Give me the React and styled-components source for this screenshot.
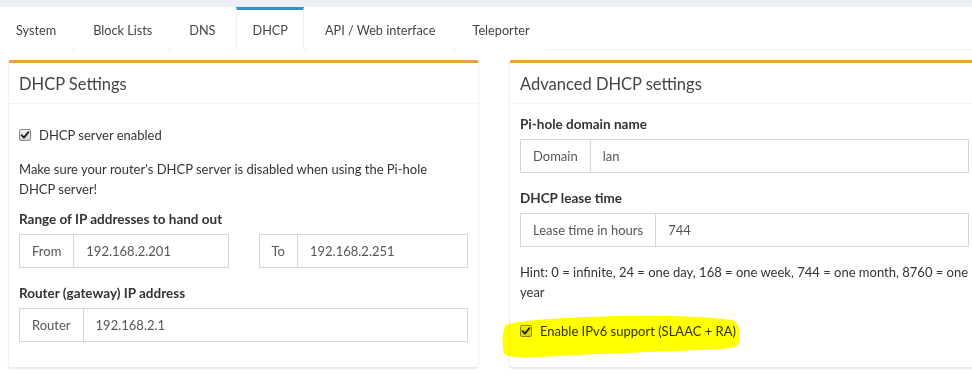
import React from "react";
import styled, { createGlobalStyle } from "styled-components";

const GlobalStyle = createGlobalStyle`
  html, body { margin: 0; padding: 0; background: #ffffff; }
  body {
    font-family: Lato, "Open Sans", Arial, sans-serif;
    font-size: 13px;
    color: #333;
    overflow: hidden;
  }
  * { box-sizing: border-box; }
`;

const Page = styled.div`
  position: relative;
  width: 972px;
  height: 375px;
  overflow: hidden;
  background: #fff;
`;

const TopStrip = styled.div`
  height: 7px;
  background: #ecf0f5;
`;

const TabBar = styled.ul`
  display: flex;
  margin: 0;
  padding: 0;
  list-style: none;
  background: #fff;
  border-bottom: 1px solid #f0f0f0;
`;

const Tab = styled.li`
  margin-right: 5px;
  padding: 10px 15px;
  line-height: 20px;
  font-size: 12.7px;
  color: #444;
  border-top: 3px solid ${(p) => (p.$active ? "#3c8dbc" : "transparent")};
  border-left: 1px solid ${(p) => (p.$active ? "#f0f0f0" : "transparent")};
  border-right: 1px solid ${(p) => (p.$active ? "#f0f0f0" : "transparent")};
  margin-bottom: -1px;
  background: #fff;
`;

const Content = styled.div`
  display: flex;
  align-items: stretch;
  gap: 30px;
  padding: 10px 0 0 8px;
`;

const Box = styled.section`
  flex: 0 0 471px;
  border-top: 3px solid #e9a13d;
  border-left: 1px solid #f1f1f1;
  border-right: 1px solid #f1f1f1;
  border-bottom: 1px solid #ececec;
  border-radius: 3px;
  box-shadow: 0 1px 1px rgba(0, 0, 0, 0.08);
  background: #fff;
`;

const BoxHeader = styled.div`
  padding: 11px 10px 9px;
  border-bottom: 1px solid #f2f2f2;
`;

const BoxTitle = styled.h3`
  margin: 0;
  font-size: 16.5px;
  font-weight: 400;
  line-height: 20px;
  color: #444;
`;

const BoxBody = styled.div`
  padding: 10px;
`;

const FormGroup = styled.div`
  margin-bottom: 15px;
`;

const Label = styled.label`
  display: block;
  margin-bottom: 5px;
  font-weight: 700;
  font-size: 13.5px;
  line-height: 20px;
  color: #333;
`;

const InputGroup = styled.div`
  display: flex;
  height: 34px;
  border: 1px solid #d2d6de;
  background: #fff;
`;

const Addon = styled.span`
  display: flex;
  align-items: center;
  padding: 0 12px;
  border-right: 1px solid #d2d6de;
  color: #555;
  white-space: nowrap;
`;

const Value = styled.span`
  display: flex;
  align-items: center;
  flex: 1;
  padding: 0 12px;
  color: #555;
`;

const TwoCols = styled.div`
  display: grid;
  grid-template-columns: 1fr 1fr;
  gap: 30px;
`;

const CheckRow = styled.div`
  display: flex;
  align-items: center;
  gap: 8px;
  height: 20px;
  margin-top: ${(p) => p.$mt || "10px"};
  margin-bottom: ${(p) => p.$mb || "10px"};
  line-height: 20px;
`;

const CheckBoxMark = styled.span`
  display: inline-flex;
  align-items: center;
  justify-content: center;
  width: 12px;
  height: 12px;
  border: 1px solid #8a8a8a;
  border-radius: 2px;
  background: linear-gradient(#eeeeee, #d6d6d6);
`;

const Paragraph = styled.p`
  margin: 0 0 10px;
  line-height: 20px;
`;

const Line = styled.span`
  display: block;
  white-space: nowrap;
`;

const Highlight = styled.svg`
  position: absolute;
  left: 500px;
  top: 312px;
  width: 242px;
  height: 50px;
  mix-blend-mode: multiply;
  pointer-events: none;
`;

function CheckBox() {
  return (
    <CheckBoxMark>
      <svg width="10" height="10" viewBox="0 0 10 10">
        <path d="M1.6 5.2 L3.9 7.6 L8.4 2.2" fill="none" stroke="#222" strokeWidth="1.9" strokeLinecap="round" strokeLinejoin="round" />
      </svg>
    </CheckBoxMark>
  );
}

function Field({ label, addon, value }) {
  return (
    <FormGroup>
      {label && <Label>{label}</Label>}
      <InputGroup>
        <Addon>{addon}</Addon>
        <Value>{value}</Value>
      </InputGroup>
    </FormGroup>
  );
}

const tabs = ["System", "Block Lists", "DNS", "DHCP", "API / Web interface", "Teleporter"];

export default function App() {
  return (
    <Page>
      <GlobalStyle />
      <TopStrip />
      <TabBar>
        {tabs.map((t) => (
          <Tab key={t} $active={t === "DHCP"}>
            {t}
          </Tab>
        ))}
      </TabBar>
      <Content>
        <Box>
          <BoxHeader>
            <BoxTitle>DHCP Settings</BoxTitle>
          </BoxHeader>
          <BoxBody>
            <CheckRow $mt="11px" $mb="14px">
              <CheckBox />
              <span>DHCP server enabled</span>
            </CheckRow>
            <Paragraph>
              <Line>Make sure your router's DHCP server is disabled when using the Pi-hole</Line>
              <Line>DHCP server!</Line>
            </Paragraph>
            <Label>Range of IP addresses to hand out</Label>
            <TwoCols>
              <Field addon="From" value="192.168.2.201" />
              <Field addon="To" value="192.168.2.251" />
            </TwoCols>
            <Field label="Router (gateway) IP address" addon="Router" value="192.168.2.1" />
          </BoxBody>
        </Box>
        <Box>
          <BoxHeader>
            <BoxTitle>Advanced DHCP settings</BoxTitle>
          </BoxHeader>
          <BoxBody>
            <Field label="Pi-hole domain name" addon="Domain" value="lan" />
            <Field label="DHCP lease time" addon="Lease time in hours" value="744" />
            <Paragraph>
              <Line>Hint: 0 = infinite, 24 = one day, 168 = one week, 744 = one month, 8760 = one</Line>
              <Line>year</Line>
            </Paragraph>
            <CheckRow $mt="19px">
              <CheckBox />
              <span>Enable IPv6 support (SLAAC + RA)</span>
            </CheckRow>
          </BoxBody>
        </Box>
      </Content>
      <Highlight viewBox="0 0 242 50">
        <path
          d="M6 13 C 20 8, 60 6, 100 4.5 C 150 3, 200 4, 232 8 C 240 10, 240 20, 239 30 C 238 36, 230 37, 200 38 C 150 40, 90 42, 40 45 C 20 46, 5 46, 3.5 40 C 2 32, 2 18, 6 13 Z"
          fill="#ffff00"
        />
      </Highlight>
    </Page>
  );
}
